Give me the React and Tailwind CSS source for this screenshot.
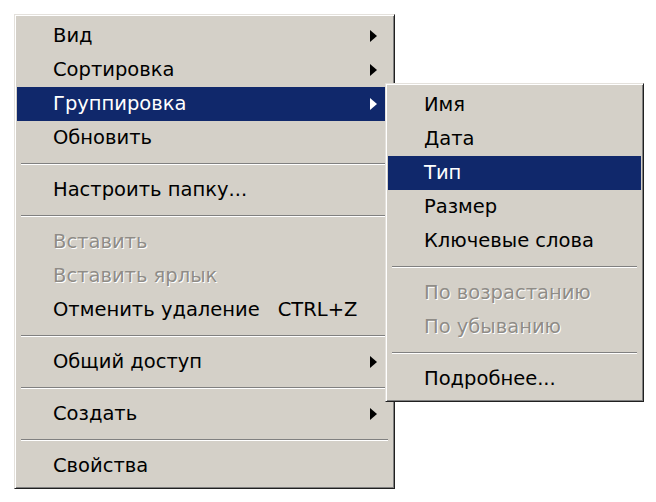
const main = [
  { label: "Вид", arrow: true },
  { label: "Сортировка", arrow: true },
  { label: "Группировка", arrow: true, active: true },
  { label: "Обновить" },
  { sep: true },
  { label: "Настроить папку..." },
  { sep: true },
  { label: "Вставить", disabled: true },
  { label: "Вставить ярлык", disabled: true },
  { label: "Отменить удаление", shortcut: "CTRL+Z" },
  { sep: true },
  { label: "Общий доступ", arrow: true },
  { sep: true },
  { label: "Создать", arrow: true },
  { sep: true },
  { label: "Свойства" },
];

const sub = [
  { label: "Имя" },
  { label: "Дата" },
  { label: "Тип", active: true },
  { label: "Размер" },
  { label: "Ключевые слова" },
  { sep: true },
  { label: "По возрастанию", disabled: true },
  { label: "По убыванию", disabled: true },
  { sep: true },
  { label: "Подробнее..." },
];

function Arrow({ white }) {
  return (
    <svg width="7" height="12" viewBox="0 0 7 12" className="shrink-0">
      <path d="M0 0 L7 6 L0 12 Z" fill={white ? "#ffffff" : "#000000"} />
    </svg>
  );
}

function Item({ item }) {
  if (item.sep) {
    return (
      <div className="h-[18px] flex items-center px-[4px]">
        <div className="w-full border-t border-b border-t-[#808080] border-b-white" />
      </div>
    );
  }
  const color = item.active
    ? "bg-[#10286b] text-white"
    : item.disabled
    ? "text-[#8f8c87] [text-shadow:1px_1px_0_#ffffff]"
    : "text-black";
  return (
    <div className={`h-[34px] flex items-center pl-[36px] pr-[15px] ${color}`}>
      <span className="flex-1 whitespace-nowrap">
        {item.label}
        {item.shortcut && <span className="ml-[18px]">{item.shortcut}</span>}
      </span>
      {item.arrow && <Arrow white={item.active} />}
    </div>
  );
}

function Menu({ items, className }) {
  return (
    <div
      className={`bg-[#d4d0c8] border border-t-[#e4e1dc] border-l-[#e4e1dc] border-r-[#202020] border-b-[#202020] shadow-[inset_1px_1px_0_#ffffff,inset_-1px_-1px_0_#808080] pt-[4px] pb-[5px] px-[2px] ${className}`}
    >
      {items.map((it, i) => (
        <Item key={i} item={it} />
      ))}
    </div>
  );
}

export default function App() {
  return (
    <div
      className="relative w-[656px] h-[502px] bg-white overflow-hidden text-[19.5px] leading-none"
      style={{ fontFamily: "'DejaVu Sans', sans-serif" }}
    >
      <Menu items={main} className="ml-[14px] mt-[14px] w-[381px]" />
      <Menu items={sub} className="absolute left-[385px] top-[83px] w-[259px]" />
    </div>
  );
}
